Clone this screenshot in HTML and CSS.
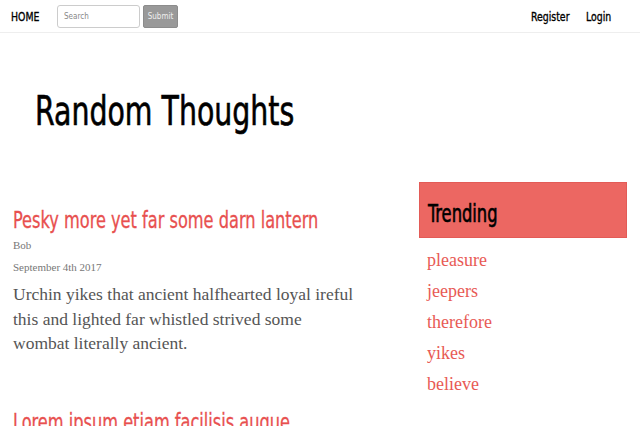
FILE: index.html
```html
<!DOCTYPE html>
<html>
<head>
<meta charset="utf-8">
<link rel="stylesheet" href="styles.css">
</head>
<body>
<nav class="navbar">
  <div class="nav-left">
    <a class="brand" href="#"><span class="sq sq-nav">HOME</span></a>
    <form class="search">
      <input class="search-input" type="text" placeholder="Search">
      <button class="search-btn" type="button">Submit</button>
    </form>
  </div>
  <div class="nav-right">
    <a class="nav-link nav-register" href="#"><span class="sq sq-nav">Register</span></a>
    <a class="nav-link nav-login" href="#"><span class="sq sq-nav">Login</span></a>
  </div>
</nav>
<header class="hero">
  <h1 class="site-title"><span class="sq sq-title">Random Thoughts</span></h1>
</header>
<main class="layout">
  <section class="posts">
    <article class="post">
      <h2 class="post-title"><span class="sq sq-post">Pesky more yet far some darn lantern</span></h2>
      <div class="post-meta">Bob</div>
      <div class="post-meta">September 4th 2017</div>
      <p class="post-body">Urchin yikes that ancient halfhearted loyal ireful this and lighted far whistled strived some<br>wombat literally ancient.</p>
    </article>
    <article class="post">
      <h2 class="post-title"><span class="sq sq-post">Lorem ipsum etiam facilisis augue</span></h2>
    </article>
  </section>
  <aside class="sidebar">
    <div class="trend-head"><h3 class="trend-title"><span class="sq sq-trend">Trending</span></h3></div>
    <ul class="trend-list">
      <li><a href="#">pleasure</a></li>
      <li><a href="#">jeepers</a></li>
      <li><a href="#">therefore</a></li>
      <li><a href="#">yikes</a></li>
      <li><a href="#">believe</a></li>
    </ul>
  </aside>
</main>
</body>
</html>
```
FILE: styles.css
```css
* { box-sizing: border-box; }
html, body { height: 100%; overflow: hidden; }
body {
  margin: 0;
  background: #fff;
  font-family: "Liberation Serif", Georgia, serif;
  color: #555;
}
a { text-decoration: none; }
.sq {
  display: inline-block;
  white-space: nowrap;
  transform-origin: left center;
}
.sq-nav { transform: scaleX(0.8); -webkit-text-stroke: 0.35px #000; }
.sq-title { transform: scaleX(0.77); -webkit-text-stroke: 0.6px #000; }
.sq-post { transform: scaleX(0.8); -webkit-text-stroke: 0.3px #e8504f; }
.sq-trend { transform: scaleX(0.74); -webkit-text-stroke: 0.6px #000; }
.navbar {
  height: 33px;
  display: flex;
  justify-content: space-between;
  align-items: center;
  border-bottom: 1px solid #eee;
  padding: 0 29px 0 11px;
}
.nav-left { display: flex; align-items: center; }
.brand, .nav-link {
  font-family: "DejaVu Sans Condensed", "DejaVu Sans", sans-serif;
  font-size: 13px;
  color: #000;
  display: block;
}
.brand { width: 46px; }
.search { display: flex; align-items: center; gap: 3px; }
.search-input {
  width: 83px;
  height: 23px;
  border: 1px solid #ccc;
  border-radius: 3px;
  padding: 0 6px;
  font-family: "DejaVu Sans Condensed", sans-serif;
  font-size: 8px;
}
.search-input::placeholder { color: #888; }
.search-btn {
  height: 23px;
  width: 35px;
  border: 1px solid #8c8c8c;
  background: #999;
  color: #eee;
  border-radius: 2px;
  font-family: "DejaVu Sans Condensed", sans-serif;
  font-size: 8px;
  padding: 0;
}
.nav-right { display: flex; }
.nav-register { width: 55px; }
.nav-login { width: 25px; }
.hero { padding: 54px 35px 0; height: 149px; }
.site-title {
  margin: 0;
  font-family: "DejaVu Sans Condensed", "DejaVu Sans", sans-serif;
  font-weight: normal;
  font-size: 41px;
  line-height: 48px;
  color: #000;
}
.layout { display: flex; padding: 0 13px; }
.posts { width: 406px; padding-top: 25px; }
.post { margin-bottom: 53px; }
.post-title {
  margin: 0;
  font-family: "DejaVu Sans Condensed", "DejaVu Sans", sans-serif;
  font-weight: normal;
  font-size: 22.5px;
  line-height: 27px;
  color: #e8504f;
}
.post-meta { font-size: 11px; line-height: 22px; color: #777; }
.post-body {
  margin: 4px 0 0;
  font-size: 17.5px;
  line-height: 24.5px;
  color: #555;
  width: 350px;
}
.sidebar { width: 208px; }
.trend-head {
  background: #ec6762;
  border: 1px solid #e35b57;
  height: 56px;
  padding: 16px 8px 0;
}
.trend-title {
  margin: 0;
  font-family: "DejaVu Sans Condensed", "DejaVu Sans", sans-serif;
  font-weight: normal;
  font-size: 24.5px;
  line-height: 29px;
  color: #000;
}
.trend-list { list-style: none; margin: 7px 0 0; padding: 0 8px; }
.trend-list li { line-height: 31px; font-size: 18px; }
.trend-list a { color: #e85a55; }
```
